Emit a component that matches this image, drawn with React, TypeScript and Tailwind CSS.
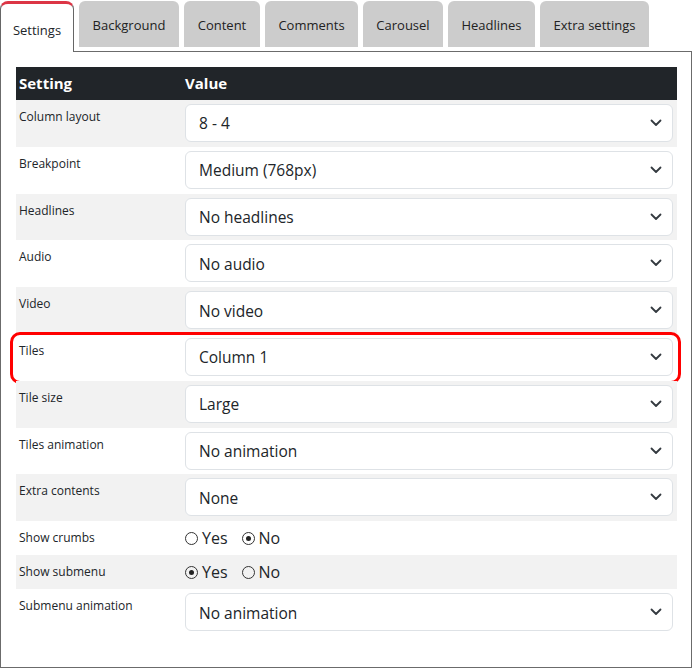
import React from "react";

type Row =
  | { label: string; kind: "select"; value: string }
  | { label: string; kind: "radio"; yes: boolean };

const rows: Row[] = [
  { label: "Column layout", kind: "select", value: "8 - 4" },
  { label: "Breakpoint", kind: "select", value: "Medium (768px)" },
  { label: "Headlines", kind: "select", value: "No headlines" },
  { label: "Audio", kind: "select", value: "No audio" },
  { label: "Video", kind: "select", value: "No video" },
  { label: "Tiles", kind: "select", value: "Column 1" },
  { label: "Tile size", kind: "select", value: "Large" },
  { label: "Tiles animation", kind: "select", value: "No animation" },
  { label: "Extra contents", kind: "select", value: "None" },
  { label: "Show crumbs", kind: "radio", yes: false },
  { label: "Show submenu", kind: "radio", yes: true },
  { label: "Submenu animation", kind: "select", value: "No animation" },
];

const tabs = [
  { name: "Background", w: "w-[100px]" },
  { name: "Content", w: "w-[76px]" },
  { name: "Comments", w: "w-[93px]" },
  { name: "Carousel", w: "w-[80px]" },
  { name: "Headlines", w: "w-[87px]" },
  { name: "Extra settings", w: "w-[109px]" },
];

function Chevron() {
  return (
    <svg width="12" height="8" viewBox="0 0 12 8" fill="none">
      <path d="M1.5 1.5L6 6L10.5 1.5" stroke="#343a40" strokeWidth="1.8" strokeLinecap="round" strokeLinejoin="round" />
    </svg>
  );
}

function Radio({ checked, label }: { checked: boolean; label: string }) {
  return (
    <span className="flex items-center gap-[4px]">
      <span className="flex h-[13px] w-[13px] items-center justify-center rounded-full border border-[#333]">
        {checked && <span className="h-[5px] w-[5px] rounded-full bg-[#222]" />}
      </span>
      <span className="text-[16px] text-[#212529]">{label}</span>
    </span>
  );
}

export default function App() {
  return (
    <div className="w-[693px] pt-[1px] font-['Open_Sans',sans-serif] text-[#212529]">
      {/* Tabs */}
      <div className="relative z-10 -mb-px flex items-start gap-[5px]">
        <div className="flex h-[51px] w-[74px] items-center justify-center rounded-t-[8px] border-x border-t-[3px] border-x-[#666] border-t-[#dc3545] bg-white pt-[6px] text-[13px]">
          Settings
        </div>
        {tabs.map((t) => (
          <div
            key={t.name}
            className={`flex h-[46px] ${t.w} items-center justify-center rounded-t-[6px] bg-[#cccccc] pt-[3px] text-[13px] font-medium text-[#222]`}
          >
            {t.name}
          </div>
        ))}
      </div>

      {/* Panel */}
      <div className="w-[692px] border border-[#6b6b6b] px-[15px] pt-[15px] pb-[31px]">
        <div className="w-[661px]">
          <div className="flex h-[33px] items-center bg-[#212529] text-[15px] font-bold text-white">
            <div className="w-[166px] pl-[3px]">Setting</div>
            <div className="pl-[3px]">Value</div>
          </div>
          {rows.map((r, i) => (
            <div
              key={r.label}
              className={`relative flex ${i % 2 === 0 ? "bg-[#f2f2f2]" : "bg-white"} ${
                r.kind === "select" ? "h-[46.8px] items-start" : "h-[34px] items-center"
              }`}
            >
              <div className={`w-[166px] pl-[3px] text-[12px] leading-[18px] ${r.kind === "select" ? "pt-[8px]" : ""}`}>
                {r.label}
              </div>
              {r.kind === "select" ? (
                <div className="pt-[4px] pl-[3px]">
                  <div className="flex h-[38px] w-[488px] items-center justify-between rounded-[6px] border border-[#dee2e6] bg-white pl-[13px] pr-[10px] text-[15.5px]">
                    <span className="pt-[2px]">{r.value}</span>
                    <Chevron />
                  </div>
                </div>
              ) : (
                <div className="flex items-center gap-[14px] pl-[3px]">
                  <Radio checked={r.yes} label="Yes" />
                  <Radio checked={!r.yes} label="No" />
                </div>
              )}
              {r.label === "Tiles" && (
                <div className="pointer-events-none absolute -top-[2px] -right-[4px] -bottom-[3px] -left-[6px] rounded-[10px] border-[3px] border-[#ff0000]" />
              )}
            </div>
          ))}
        </div>
      </div>
    </div>
  );
}
